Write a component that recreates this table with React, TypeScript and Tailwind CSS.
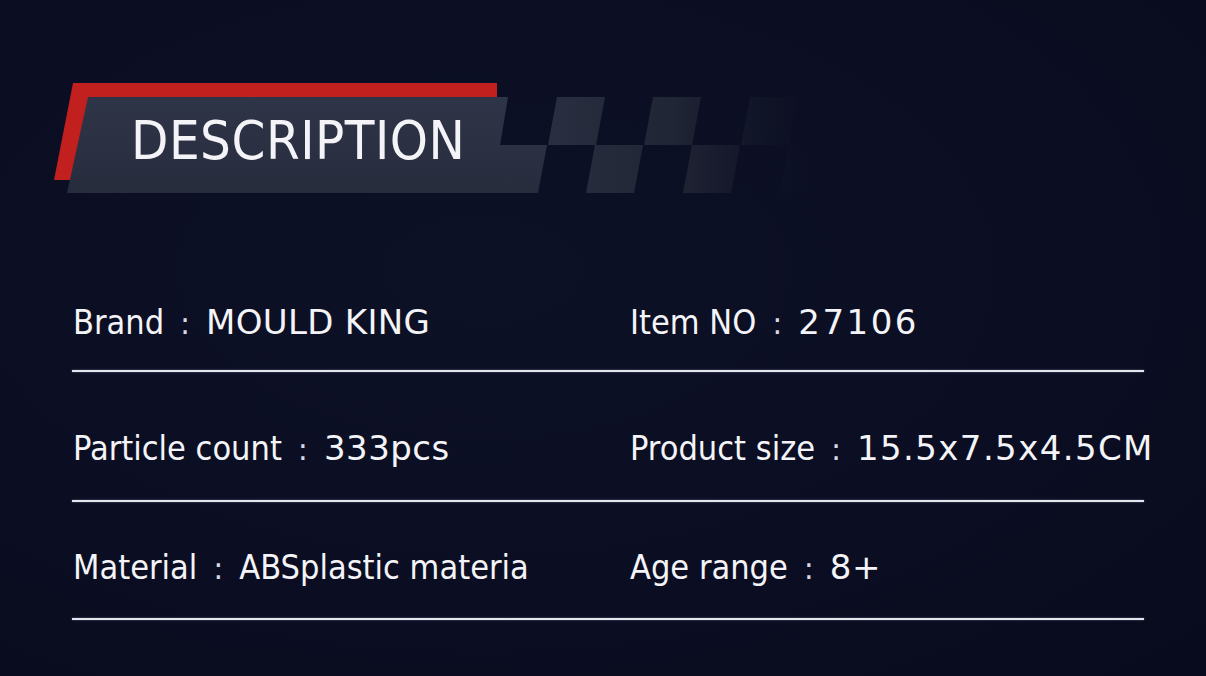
import React from "react";

const specs = [
  {
    left: { label: "Brand", value: "MOULD KING", track: "tracking-[0.3px]" },
    right: { label: "Item NO", value: "27106", track: "tracking-[2.5px]" },
    gapTop: "mt-[112px]",
    gapLine: "mt-[31px]",
  },
  {
    left: { label: "Particle count", value: "333pcs", track: "tracking-[0.5px]" },
    right: { label: "Product size", value: "15.5x7.5x4.5CM", track: "tracking-[1.4px]" },
    gapTop: "mt-[59px]",
    gapLine: "mt-[35px]",
  },
  {
    left: { label: "Material", value: "ABSplastic materia", track: "", condensed: true },
    right: { label: "Age range", value: "8+", track: "tracking-[0.5px]" },
    gapTop: "mt-[48px]",
    gapLine: "mt-[34px]",
  },
];

const condensedFont =
  "font-['DejaVu_Sans_Condensed','DejaVu_Sans',sans-serif] font-stretch-semi-condensed";
const regularFont = "font-['DejaVu_Sans',sans-serif]";

type SpecProps = { label: string; value: string; track: string; condensed?: boolean };

function Spec({ label, value, track, condensed }: SpecProps) {
  return (
    <div className="flex items-baseline whitespace-nowrap">
      <span className={condensedFont}>{label}</span>
      <span className="inline-block w-[42px] text-center text-[30px] font-['DejaVu_Sans',sans-serif] text-[#d8d9e2]">
        :
      </span>
      <span className={`${condensed ? condensedFont : regularFont} ${track}`}>{value}</span>
    </div>
  );
}

function Banner() {
  // checker parallelograms: top-left x, row y
  const squares = [
    [557, 14], [653, 14], [750, 14],
    [595, 62], [692, 62], [789, 62],
  ];
  return (
    <svg className="absolute left-0 top-0" width="900" height="110" viewBox="0 0 900 110">
      <defs>
        <linearGradient id="panel" x1="0" y1="14" x2="0" y2="110" gradientUnits="userSpaceOnUse">
          <stop offset="0" stopColor="#2f3548" />
          <stop offset="1" stopColor="#272c3d" />
        </linearGradient>
        <linearGradient id="fade" x1="540" y1="0" x2="810" y2="0" gradientUnits="userSpaceOnUse">
          <stop offset="0" stopColor="#2a2f41" stopOpacity="1" />
          <stop offset="0.5" stopColor="#242939" stopOpacity="0.85" />
          <stop offset="1" stopColor="#161a2b" stopOpacity="0" />
        </linearGradient>
      </defs>
      <polygon points="73,0 497,0 497,97 54,97" fill="#c21f1f" />
      <polygon points="88,14 508,14 500,62 547,62 538,110 67,110" fill="url(#panel)" />
      {squares.map(([x, y]) => (
        <polygon
          key={`${x}-${y}`}
          points={`${x},${y} ${x + 48},${y} ${x + 39},${y + 48} ${x - 9},${y + 48}`}
          fill="url(#fade)"
        />
      ))}
    </svg>
  );
}

export default function App() {
  return (
    <div className="h-[676px] w-[1206px] overflow-hidden bg-[radial-gradient(ellipse_at_40%_40%,#0d1125_0%,#0b0e22_60%,#080b1d_100%)] text-[#f4f4f8]">
      <div className="relative mt-[83px] h-[110px]">
        <Banner />
        <h1 className="relative pl-[131px] pt-[31px] text-[54px] leading-none font-['DejaVu_Sans_Condensed','DejaVu_Sans',sans-serif] font-stretch-semi-condensed tracking-[0.5px]">
          DESCRIPTION
        </h1>
      </div>

      <div className="pl-[73px] pr-[62px]">
        {specs.map((row) => (
          <div key={row.left.label}>
            <div className={`grid grid-cols-[557px_1fr] text-[34px] leading-none ${row.gapTop}`}>
              <Spec {...row.left} />
              <Spec {...row.right} />
            </div>
            <div className={`-ml-px h-[2px] bg-[#e4e5ee] shadow-[0_0_2px_rgba(200,205,230,0.5)] ${row.gapLine}`} />
          </div>
        ))}
      </div>
    </div>
  );
}
